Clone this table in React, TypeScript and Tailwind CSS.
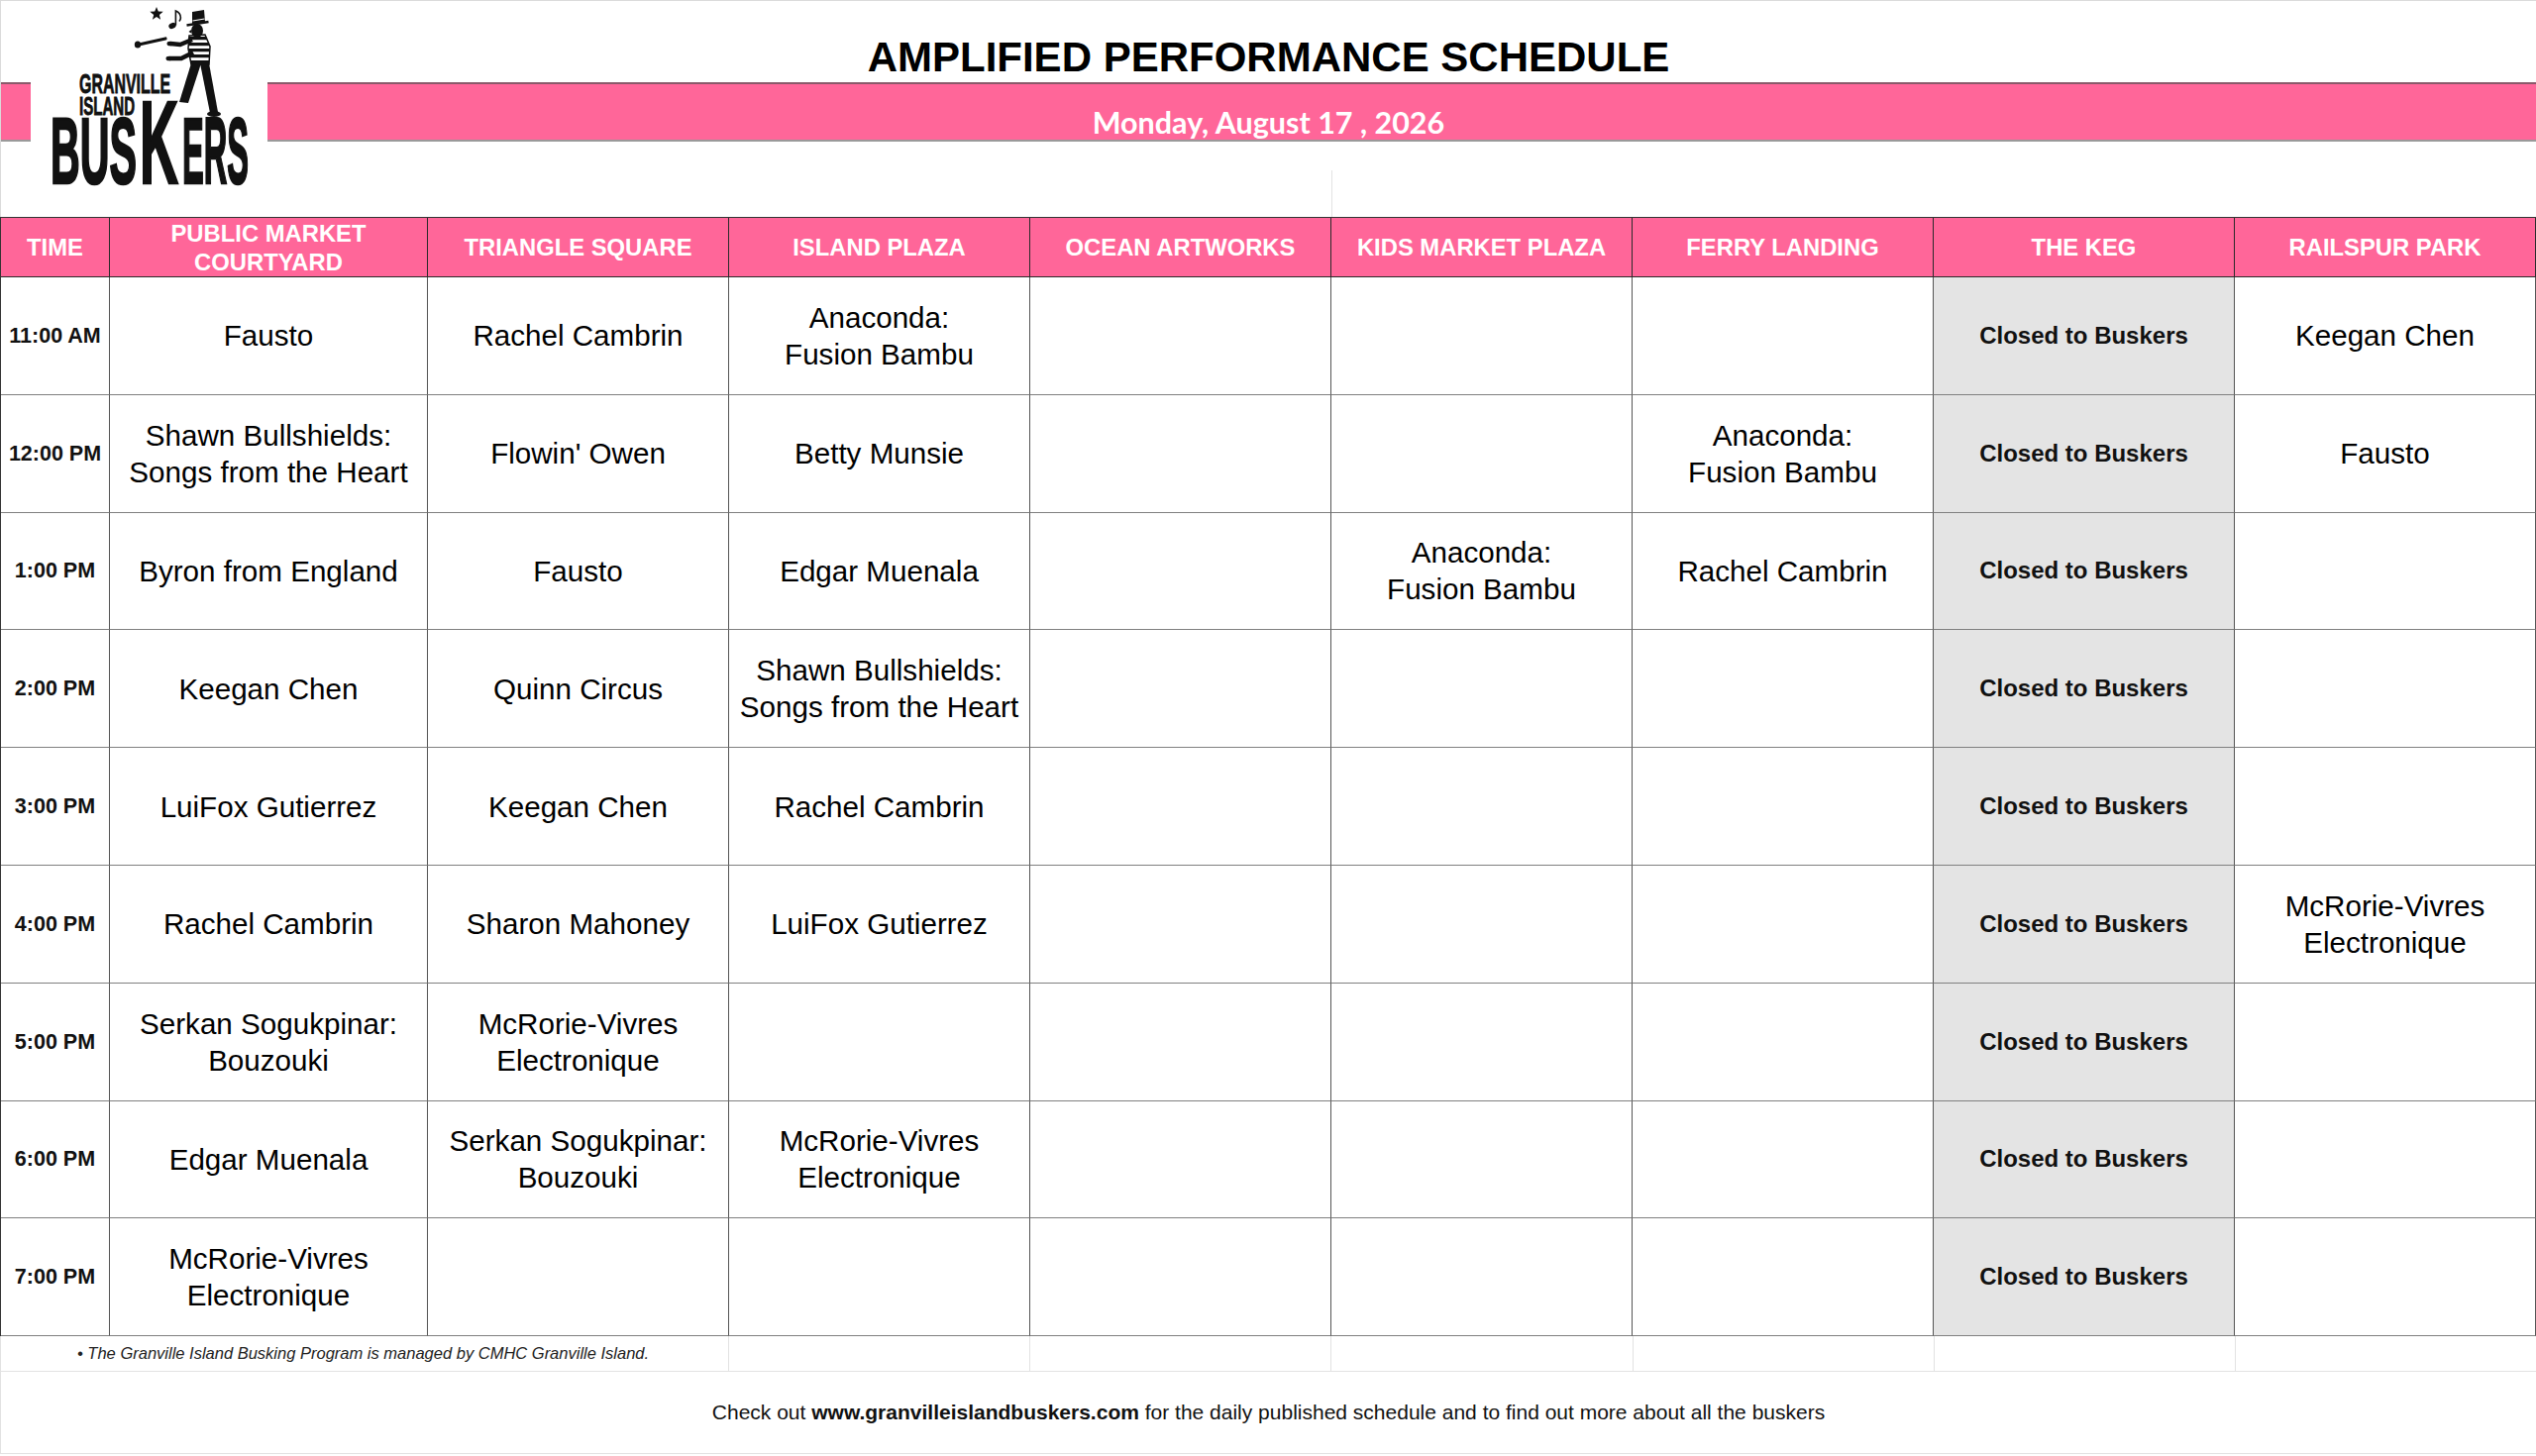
const PINK = "bg-[#ff6699]";

const venues = [
  "TIME",
  "PUBLIC MARKET COURTYARD",
  "TRIANGLE SQUARE",
  "ISLAND PLAZA",
  "OCEAN ARTWORKS",
  "KIDS MARKET PLAZA",
  "FERRY LANDING",
  "THE KEG",
  "RAILSPUR PARK",
];

// one entry per venue column after TIME; "\n" marks the line break in a cell
const schedule: { time: string; acts: string[] }[] = [
  { time: "11:00 AM", acts: ["Fausto", "Rachel Cambrin", "Anaconda:\nFusion Bambu", "", "", "", "", "Keegan Chen"] },
  { time: "12:00 PM", acts: ["Shawn Bullshields:\nSongs from the Heart", "Flowin' Owen", "Betty Munsie", "", "", "Anaconda:\nFusion Bambu", "", "Fausto"] },
  { time: "1:00 PM", acts: ["Byron from England", "Fausto", "Edgar Muenala", "", "Anaconda:\nFusion Bambu", "Rachel Cambrin", "", ""] },
  { time: "2:00 PM", acts: ["Keegan Chen", "Quinn Circus", "Shawn Bullshields:\nSongs from the Heart", "", "", "", "", ""] },
  { time: "3:00 PM", acts: ["LuiFox Gutierrez", "Keegan Chen", "Rachel Cambrin", "", "", "", "", ""] },
  { time: "4:00 PM", acts: ["Rachel Cambrin", "Sharon Mahoney", "LuiFox Gutierrez", "", "", "", "", "McRorie-Vivres\nElectronique"] },
  { time: "5:00 PM", acts: ["Serkan Sogukpinar:\nBouzouki", "McRorie-Vivres\nElectronique", "", "", "", "", "", ""] },
  { time: "6:00 PM", acts: ["Edgar Muenala", "Serkan Sogukpinar:\nBouzouki", "McRorie-Vivres\nElectronique", "", "", "", "", ""] },
  { time: "7:00 PM", acts: ["McRorie-Vivres\nElectronique", "", "", "", "", "", "", ""] },
];

const KEG = 6;

function Logo() {
  return (
    <svg className="absolute left-0 top-0" width="270" height="200" viewBox="0 0 270 200">
      <defs>
        <pattern id="stripes" width="6" height="6" patternUnits="userSpaceOnUse">
          <rect width="6" height="3.2" fill="#111" />
        </pattern>
      </defs>
      <rect x="31" y="80" width="239" height="66" fill="#fff" />
      <polygon
        points="158,6 159.8,10.6 164.7,10.8 160.9,13.9 162.1,18.7 158,16 153.9,18.7 155.2,13.9 151.3,10.8 156.2,10.6"
        fill="#111"
      />
      <ellipse cx="174" cy="25" rx="3.8" ry="2.8" transform="rotate(-25 174 25)" fill="#111" />
      <path d="M177.4 24.5 L177.4 10 q5 2 5 7 q0 2 -1.5 3.5" stroke="#111" strokeWidth="1.6" fill="none" />
      <path d="M140 44 L167 38" stroke="#111" strokeWidth="3.2" strokeLinecap="round" />
      <ellipse cx="139" cy="44" rx="3.2" ry="3.6" fill="#111" />
      <ellipse cx="171.5" cy="43" rx="3" ry="2.3" fill="#111" />
      <ellipse cx="170.5" cy="58" rx="3" ry="2.3" fill="#111" />
      <path d="M194 39 L182 44 L172 43" stroke="#111" strokeWidth="4.5" fill="none" strokeLinejoin="round" />
      <path d="M195 52 L183 58 L171 58" stroke="#111" strokeWidth="4.5" fill="none" strokeLinejoin="round" />
      <ellipse cx="199" cy="30" rx="6" ry="7" fill="#111" />
      <path d="M193 29 l-2.5 2 l2.5 1.5 Z" fill="#111" />
      <polygon points="194,23 207,21 206,9 194,11" fill="#111" />
      <path d="M188.5 24.5 L210.5 21" stroke="#111" strokeWidth="2.6" />
      <path d="M194.5 20 L206.5 18" stroke="#fff" strokeWidth="1.2" />
      <path d="M191 35 L207 34 L212 46 L211 64 L193 64 L190 48 Z" fill="url(#stripes)" stroke="#111" strokeWidth="1.5" />
      <path d="M193 63 L203 63 L190 103 L181 102 Z" fill="#111" />
      <path d="M202 63 L211 63 L220 112 L212 113 Z" fill="#111" />
      <ellipse cx="216" cy="114" rx="7" ry="3" fill="#111" />
      <g fill="#111" stroke="#111" fontFamily="Liberation Sans, Arial, sans-serif" fontWeight="700">
        <text x="80" y="93" fontSize="28" strokeWidth="0.8" textLength="92" lengthAdjust="spacingAndGlyphs">GRANVILLE</text>
        <text x="80" y="115" fontSize="25" strokeWidth="0.8" textLength="56" lengthAdjust="spacingAndGlyphs">ISLAND</text>
        <text x="51" y="184" fontSize="94" strokeWidth="2.6" textLength="87" lengthAdjust="spacingAndGlyphs">BUS</text>
        <text x="141" y="184" fontSize="118" strokeWidth="2.6" textLength="39" lengthAdjust="spacingAndGlyphs">K</text>
        <text x="184" y="184" fontSize="94" strokeWidth="2.6" textLength="67" lengthAdjust="spacingAndGlyphs">ERS</text>
      </g>
    </svg>
  );
}

function Lines({ text }: { text: string }) {
  return (
    <>
      {text.split("\n").map((line, i) => (
        <span key={i} className="block">
          {line}
        </span>
      ))}
    </>
  );
}

export default function App() {
  return (
    <div className="relative h-[1470px] w-full overflow-hidden border-t border-[#dadada] bg-white font-['Liberation_Sans',Arial,sans-serif] text-black">
      <header className="border-l border-[#dadada] pt-[36px]">
        <h1 className="h-[42px] text-center text-[42px] font-bold leading-[42px]">
          AMPLIFIED PERFORMANCE SCHEDULE
        </h1>
        <div
          className={`mt-[4px] h-[60px] border-b-2 border-t-2 border-b-[#9a9a9a] border-t-[#8a5a6a] ${PINK} pt-[23px] text-center font-['Lato',sans-serif] text-[30.5px] font-bold leading-[30px] text-white`}
        >
          Monday, August 17 , 2026
        </div>
        <div className="h-[76px] pt-[29px]">
          <div className="ml-[1343px] h-[47px] w-px bg-[#e2e2e2]" />
        </div>
      </header>

      <Logo />

      <div className="grid grid-cols-[110px_321px_repeat(7,1fr)] border-l border-t border-[#333]">
        {venues.map((v) => (
          <div
            key={v}
            className={`flex h-[60px] items-center justify-center border-b border-r border-[#2a2a2a] ${PINK} px-2 text-center text-[23.8px] font-bold leading-[29px] text-white`}
          >
            {v}
          </div>
        ))}
        {schedule.map((row) => (
          <div key={row.time} className="contents">
            <div className="flex h-[118.8px] items-center justify-center border-b border-r border-b-[#808080] border-r-[#555] text-[21.5px] font-bold text-[#111]">
              {row.time}
            </div>
            {row.acts.map((act, i) =>
              i === KEG ? (
                <div
                  key={i}
                  className="flex h-[118.8px] items-center justify-center border-b border-r border-b-[#808080] border-r-[#555] bg-[#e4e4e4] text-[24px] font-bold text-[#111]"
                >
                  Closed to Buskers
                </div>
              ) : (
                <div
                  key={i}
                  className="flex h-[118.8px] flex-col items-center justify-center border-b border-r border-b-[#808080] border-r-[#555] text-center text-[29.6px] leading-[37px]"
                >
                  <Lines text={act} />
                </div>
              )
            )}
          </div>
        ))}
      </div>

      <div className="flex h-[36px] border-b border-l border-[#e2e2e2]">
        <div className="flex w-[734px] items-center pl-[77px] text-[16.5px] italic text-[#222]">
          • The Granville Island Busking Program is managed by CMHC Granville Island.
        </div>
        {[0, 1, 2, 3, 4, 5].map((i) => (
          <div key={i} className="flex-1 border-l border-[#e2e2e2]" />
        ))}
      </div>

      <footer className="flex h-[83px] items-center justify-center border-b border-l border-[#e2e2e2] text-[21px] text-[#111]">
        <span>
          Check out <b>www.granvilleislandbuskers.com</b> for the daily published schedule and to find out more about
          all the buskers
        </span>
      </footer>
    </div>
  );
}
